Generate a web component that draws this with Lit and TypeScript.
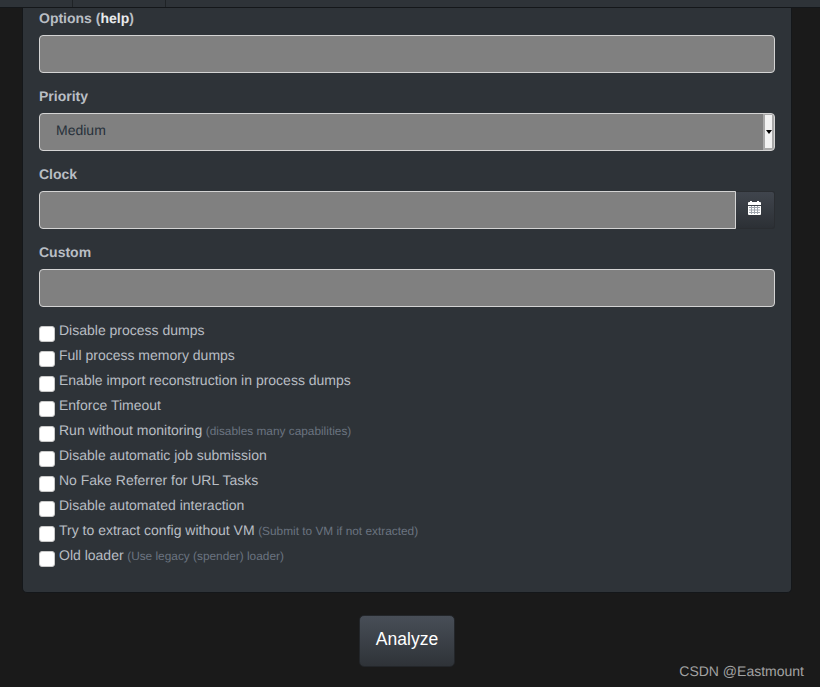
import { LitElement, html, css } from "lit";
import { customElement } from "lit/decorators.js";

const checks: [string, string?][] = [
  ["Disable process dumps"],
  ["Full process memory dumps"],
  ["Enable import reconstruction in process dumps"],
  ["Enforce Timeout"],
  ["Run without monitoring", "(disables many capabilities)"],
  ["Disable automatic job submission"],
  ["No Fake Referrer for URL Tasks"],
  ["Disable automated interaction"],
  ["Try to extract config without VM", "(Submit to VM if not extracted)"],
  ["Old loader", "(Use legacy (spender) loader)"],
];

@customElement("app-root")
export class AppRoot extends LitElement {
  static styles = css`
    :host { display: block; position: relative; width: 820px; height: 687px; overflow: hidden; background: #1a1a1a; font-family: "Liberation Sans", Arial, sans-serif; font-size: 14px; color: #b9bec4; text-rendering: geometricPrecision; }
    .topbar { height: 7px; background: #2e3338; border-bottom: 1px solid #14171a; display: flex; }
    .tab { border-right: 1px solid #1f2326; }
    .t1 { width: 72px; }
    .t2 { width: 92px; }
    .panel { margin: 0 28px 0 22px; height: 585px; box-sizing: border-box; padding: 0 16px; background: #2e3338; border: 1px solid #14171a; border-top: 0; border-radius: 0 0 5px 5px; }
    .group { margin-bottom: 13px; }
    label.title { display: block; height: 20px; line-height: 20px; font-weight: 700; margin-bottom: 7px; }
    label.title b { color: #e8eaec; }
    .field { display: block; width: 100%; height: 38px; box-sizing: border-box; background: #808080; border: 1px solid #d4d4d4; border-radius: 4px; padding: 0 16px; font: inherit; color: #2e3338; outline: none; }
    .select { display: flex; align-items: center; justify-content: space-between; padding: 0 0 0 16px; position: relative; overflow: hidden; }
    .select span { font-size: 14px; color: #27303a; padding-bottom: 4px; }
    .scroll { width: 11px; height: 100%; box-sizing: border-box; border: 3px solid #a9a9a9; border-width: 1px 2px 2px 2px; background: #f2f2f2; display: flex; align-items: center; justify-content: center; }
    .arrow { width: 0; height: 0; border-left: 3px solid transparent; border-right: 3px solid transparent; border-top: 4px solid #000; }
    .igroup { display: flex; }
    .igroup .field { flex: 1; border-radius: 4px 0 0 4px; border-right-width: 1px; }
    .addon { width: 39px; height: 38px; box-sizing: border-box; padding: 0 1px 4px 0; display: flex; align-items: center; justify-content: center; background: linear-gradient(#40454d, #2c3035); border: 1px solid #2a2d31; border-left: 0; border-radius: 0 3px 3px 0; }
    .checks { margin-top: 11px; display: flex; flex-direction: column; }
    .row { display: flex; height: 25px; align-items: flex-start; line-height: 20px; }
    .box { appearance: none; width: 16px; height: 16px; margin: 6px 4px 0 0; background: #fff; border: 1px solid #c8c8c8; border-radius: 3px; box-sizing: border-box; flex: none; }
    small { font-size: 11.85px; color: #6b7480; margin-left: 3.6px; }
    .actions { display: flex; justify-content: center; margin: 22px 29px 0 23px; }
    .btn { width: 96px; height: 52px; border: 1px solid #23262a; border-radius: 5px; background: linear-gradient(#484e57, #2f3338); color: #fff; font: 17.5px "Liberation Sans", Arial, sans-serif; padding: 0 0 4px 0; }
    .mark { position: absolute; right: 16px; bottom: 8px; color: #a3a3a3; font: 14px "Liberation Sans", sans-serif; }
  `;

  render() {
    return html`
      <div class="topbar"><div class="tab t1"></div><div class="tab t2"></div></div>
      <div class="panel">
        <div class="group">
          <label class="title">Options (<b>help</b>)</label>
          <input class="field" />
        </div>
        <div class="group">
          <label class="title">Priority</label>
          <div class="field select"><span>Medium</span><div class="scroll"><div class="arrow"></div></div></div>
        </div>
        <div class="group">
          <label class="title">Clock</label>
          <div class="igroup">
            <input class="field" />
            <div class="addon">
              <svg width="13" height="14" viewBox="0 0 13 14">
                <rect x="0" y="1" width="13" height="13" rx="1" fill="#fff"/>
                <rect x="2" y="0" width="2" height="2" fill="#fff"/>
                <rect x="9" y="0" width="2" height="2" fill="#fff"/>
                <rect x="0" y="4" width="13" height="1" fill="#3a3f46"/>
                <path d="M1 6.5h11M1 9h11M1 11.5h11M3.5 5v8M6.5 5v8M9.5 5v8" stroke="#a0a6ae" stroke-width="1" fill="none"/>
              </svg>
            </div>
          </div>
        </div>
        <div class="group">
          <label class="title">Custom</label>
          <input class="field" />
        </div>
        <div class="checks">
          ${checks.map(([t, s]) => html`<div class="row"><input type="checkbox" class="box" /><div>${t}${s ? html`<small>${s}</small>` : ""}</div></div>`)}
        </div>
      </div>
      <div class="actions"><button class="btn">Analyze</button></div>
      <div class="mark">CSDN @Eastmount</div>
    `;
  }
}
